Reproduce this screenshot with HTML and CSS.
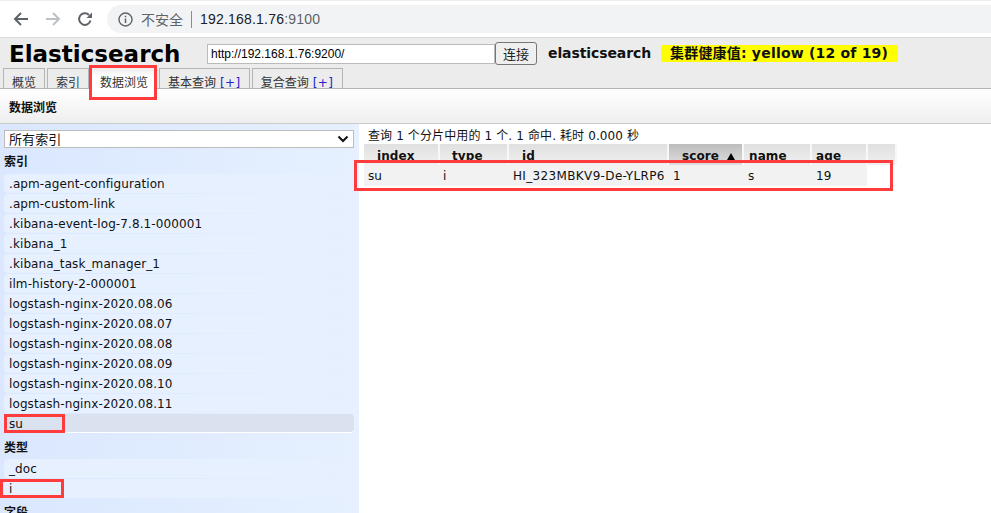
FILE: index.html
```html
<!DOCTYPE html>
<html lang="zh">
<head>
<meta charset="utf-8">
<title>Elasticsearch</title>
<link rel="stylesheet" href="styles.css">
</head>
<body>
<div class="chrome">
  <svg class="nav" width="16" height="16" viewBox="0 0 16 16"><path d="M15 8H2M8 2 2 8l6 6" fill="none" stroke="#5f6368" stroke-width="2"/></svg>
  <svg class="nav" width="16" height="16" viewBox="0 0 16 16"><path d="M1 8h13M8 2l6 6-6 6" fill="none" stroke="#bdc1c6" stroke-width="2"/></svg>
  <svg class="nav" width="16" height="16" viewBox="0 0 16 16"><path d="M13.500 9.500A5.800 5.800 0 1 1 12 4" fill="none" stroke="#5f6368" stroke-width="2"/><path d="M15 1.500V7H9.500z" fill="#5f6368"/></svg>
  <div class="omnibox">
    <svg width="15" height="15" viewBox="0 0 15 15"><circle cx="7.500" cy="7.500" r="6.500" fill="none" stroke="#5f6368" stroke-width="1.400"/><path d="M7.500 6.500v4.500M7.500 3.800v1.500" stroke="#5f6368" stroke-width="1.500"/></svg>
    <span class="insecure">不安全</span>
    <span class="sep"></span>
    <span class="url"><span class="host">192.168.1.76</span>:9100</span>
  </div>
</div>
<div class="header">
  <div class="brand-row">
    <h1 class="brand">Elasticsearch</h1>
    <input class="conn" value="http://192.168.1.76:9200/">
    <button class="connect">连接</button>
    <span class="cluster">elasticsearch</span>
    <span class="health">集群健康值: yellow (12 of 19)</span>
  </div>
  <div class="tabs">
    <span class="tab">概览</span>
    <span class="tab">索引</span>
    <span class="tab active">数据浏览</span>
    <span class="tab">基本查询 <a>[+]</a></span>
    <span class="tab">复合查询 <a>[+]</a></span>
  </div>
</div>
<div class="titlebar">数据浏览</div>
<div class="main">
  <aside class="side">
    <div class="select"><span>所有索引</span><svg width="12" height="8" viewBox="0 0 12 8"><path d="M1.500 1.500 6 6l4.500-4.500" fill="none" stroke="#111" stroke-width="2"/></svg></div>
    <h3 class="group">索引</h3>
    <ul class="list">
      <li>.apm-agent-configuration</li>
      <li>.apm-custom-link</li>
      <li>.kibana-event-log-7.8.1-000001</li>
      <li>.kibana_1</li>
      <li>.kibana_task_manager_1</li>
      <li>ilm-history-2-000001</li>
      <li>logstash-nginx-2020.08.06</li>
      <li>logstash-nginx-2020.08.07</li>
      <li>logstash-nginx-2020.08.08</li>
      <li>logstash-nginx-2020.08.09</li>
      <li>logstash-nginx-2020.08.10</li>
      <li>logstash-nginx-2020.08.11</li>
      <li class="selected">su</li>
    </ul>
    <h3 class="group">类型</h3>
    <ul class="list">
      <li>_doc</li>
      <li>i</li>
    </ul>
    <h3 class="group">字段</h3>
  </aside>
  <section class="results">
    <p class="summary">查询 1 个分片中用的 1 个. 1 命中. 耗时 0.000 秒</p>
    <table class="grid">
      <thead>
        <tr>
          <th class="c1">index</th><th class="c2">type</th><th class="c3">id</th>
          <th class="c4 sorted">score <i class="arrow"></i></th><th class="c5">name</th><th class="c6">age</th><th class="c7"></th>
        </tr>
      </thead>
      <tbody>
        <tr><td>su</td><td>i</td><td class="doc-id">HI_323MBKV9-De-YLRP6</td><td>1</td><td>s</td><td>19</td></tr>
      </tbody>
    </table>
  </section>
</div>
<div class="mark m-tab"></div>
<div class="mark m-su"></div>
<div class="mark m-i"></div>
<div class="mark m-row"></div>
</body>
</html>
```
FILE: styles.css
```css
* { box-sizing: border-box; }
html, body { margin: 0; height: 513px; overflow: hidden; background: #fff; }
body { position: relative; font-family: "DejaVu Sans", "Noto Sans CJK SC", sans-serif; font-size: 12px; color: #111; }
.chrome { height: 37px; display: flex; align-items: center; gap: 16px; padding: 4px 13px; border-top: 1px solid #eceef0; }
.nav { flex: none; }
.omnibox { width: 884px; flex: none; height: 28px; margin-left: -2px; padding-left: 11px; background: #f1f3f4; border-radius: 14px 0 0 14px; display: flex; align-items: center; font-family: "Liberation Sans", "Noto Sans CJK SC", sans-serif; }
.insecure { margin-left: 8px; font-size: 14px; color: #5f6368; }
.sep { width: 1px; height: 17px; background: #8a8d91; margin: 0 8px; }
.url { font-size: 14px; color: #5f6368; letter-spacing: .2px; }
.host { color: #202124; }
.header { height: 52px; background: #ececec; border-top: 1px solid #dcdcdc; border-bottom: 1px solid #b5b5b5; position: relative; }
.brand-row { height: 31px; display: flex; align-items: center; padding-left: 9px; }
.brand { margin: 0; font-size: 23px; line-height: 30px; font-weight: 700; color: #000; width: 198px; }
.conn { width: 288px; height: 20px; font: 12px "Liberation Sans", sans-serif; padding: 1px 3px; border: 1px solid #bbb; background: #fff; color: #000; }
.connect { width: 42px; height: 23px; padding: 0; font: 13px "Noto Sans CJK SC", sans-serif; background: #efefef; border: 1px solid #767676; border-radius: 3px; color: #222; }
.cluster { margin: 0 0 2px 11px; width: 102px; font-size: 14px; font-weight: 700; letter-spacing: -.1px; white-space: nowrap; }
.health { margin-left: 11px; width: 237px; height: 17px; background: #ff0; font-size: 14px; font-weight: 700; line-height: 17px; padding-left: 9px; white-space: nowrap; letter-spacing: .2px; }
.tabs { display: flex; gap: 2px; padding-left: 3px; height: 21px; position: absolute; bottom: -1px; left: 0; }
.tab { height: 21px; padding: 6px 8px 0; border: 1px solid #b5b5b5; background: #ececec; font-size: 12px; line-height: 16px; color: #333; white-space: nowrap; }
.tab.active { background: linear-gradient(#ececec, #fff 40%); border: 0; padding: 7px 9px 0; }
.tab a { color: #22c; letter-spacing: .5px; }
.titlebar { height: 35px; padding: 11px 9px 0; font-size: 12px; font-weight: 700; line-height: 16px; background: linear-gradient(#fff, #eee); border-bottom: 1px solid #ccc; }
.main { display: flex; height: 389px; }
.side { width: 359px; flex: none; padding: 6px 4px 0; background: linear-gradient(90deg, #dae7fe, #e6f0ff); overflow: hidden; letter-spacing: .1px; }
.select { height: 18px; width: 350px; background: #fff; border: 1px solid #bcbcbc; display: flex; align-items: center; justify-content: space-between; padding: 0 4px; font-size: 13px; line-height: 16px; font-family: "Noto Sans CJK SC", sans-serif; }
.group { margin: 0; height: 26px; padding-top: 6px; font-size: 12px; line-height: 17px; font-weight: 700; }
.list + .group { height: 25px; padding-top: 6px; }
.list { list-style: none; margin: 0; padding: 0; width: 350px; }
.list li { height: 19px; margin-bottom: 1px; padding-left: 5px; line-height: 20px; border-radius: 4px; background: linear-gradient(90deg, #e7f0ff 88%, transparent); white-space: nowrap; }
.list li.selected { background: #d9e2ee; border-bottom: 1px solid #fff; }
.results { flex: 1; padding: 5px 0 0 5px; }
.summary { margin: 0 0 0 4px; height: 15px; font-size: 12px; line-height: 15px; letter-spacing: .12px; white-space: nowrap; }
.grid { border-collapse: collapse; table-layout: fixed; width: 532px; font-size: 12px; }
.grid th { height: 21px; padding: 3px 0 0 13px; text-align: left; font-size: 12px; background: linear-gradient(#e0e0e0, #f0f0f0); border-right: 2px solid #f8f8f8; line-height: 16px; white-space: nowrap; letter-spacing: .1px; }
.grid th.c2 { padding-left: 12px; }
.grid th.c5 { padding-left: 5px; }
.grid th.c6 { padding-left: 4px; }
.grid th.sorted { background: linear-gradient(#bdbdbd, #dedede); }
.grid .c1 { width: 75px; } .grid .c2 { width: 69px; } .grid .c3 { width: 160px; } .grid .c4 { width: 75px; } .grid .c5 { width: 68px; } .grid .c6 { width: 56px; } .grid .c7 { width: 29px; }
.arrow { display: inline-block; width: 0; height: 0; margin-left: 4px; border: 4px solid transparent; border-bottom: 7px solid #000; border-top: 0; }
.grid td { height: 21px; padding: 0 0 0 5px; background: #f2f2f2; white-space: nowrap; overflow: hidden; }
.grid td:first-child, .grid td:nth-child(2) { padding-left: 4px; }
.grid td.doc-id { letter-spacing: .35px; }
.mark { position: absolute; border: 3px solid #ff3b3b; pointer-events: none; }
.m-tab { left: 89px; top: 65px; width: 68px; height: 35px; }
.m-su { left: 4px; top: 414px; width: 61px; height: 19px; }
.m-i { left: 0; top: 479px; width: 64px; height: 19px; }
.m-row { left: 354px; top: 160px; width: 539px; height: 31px; }
```
